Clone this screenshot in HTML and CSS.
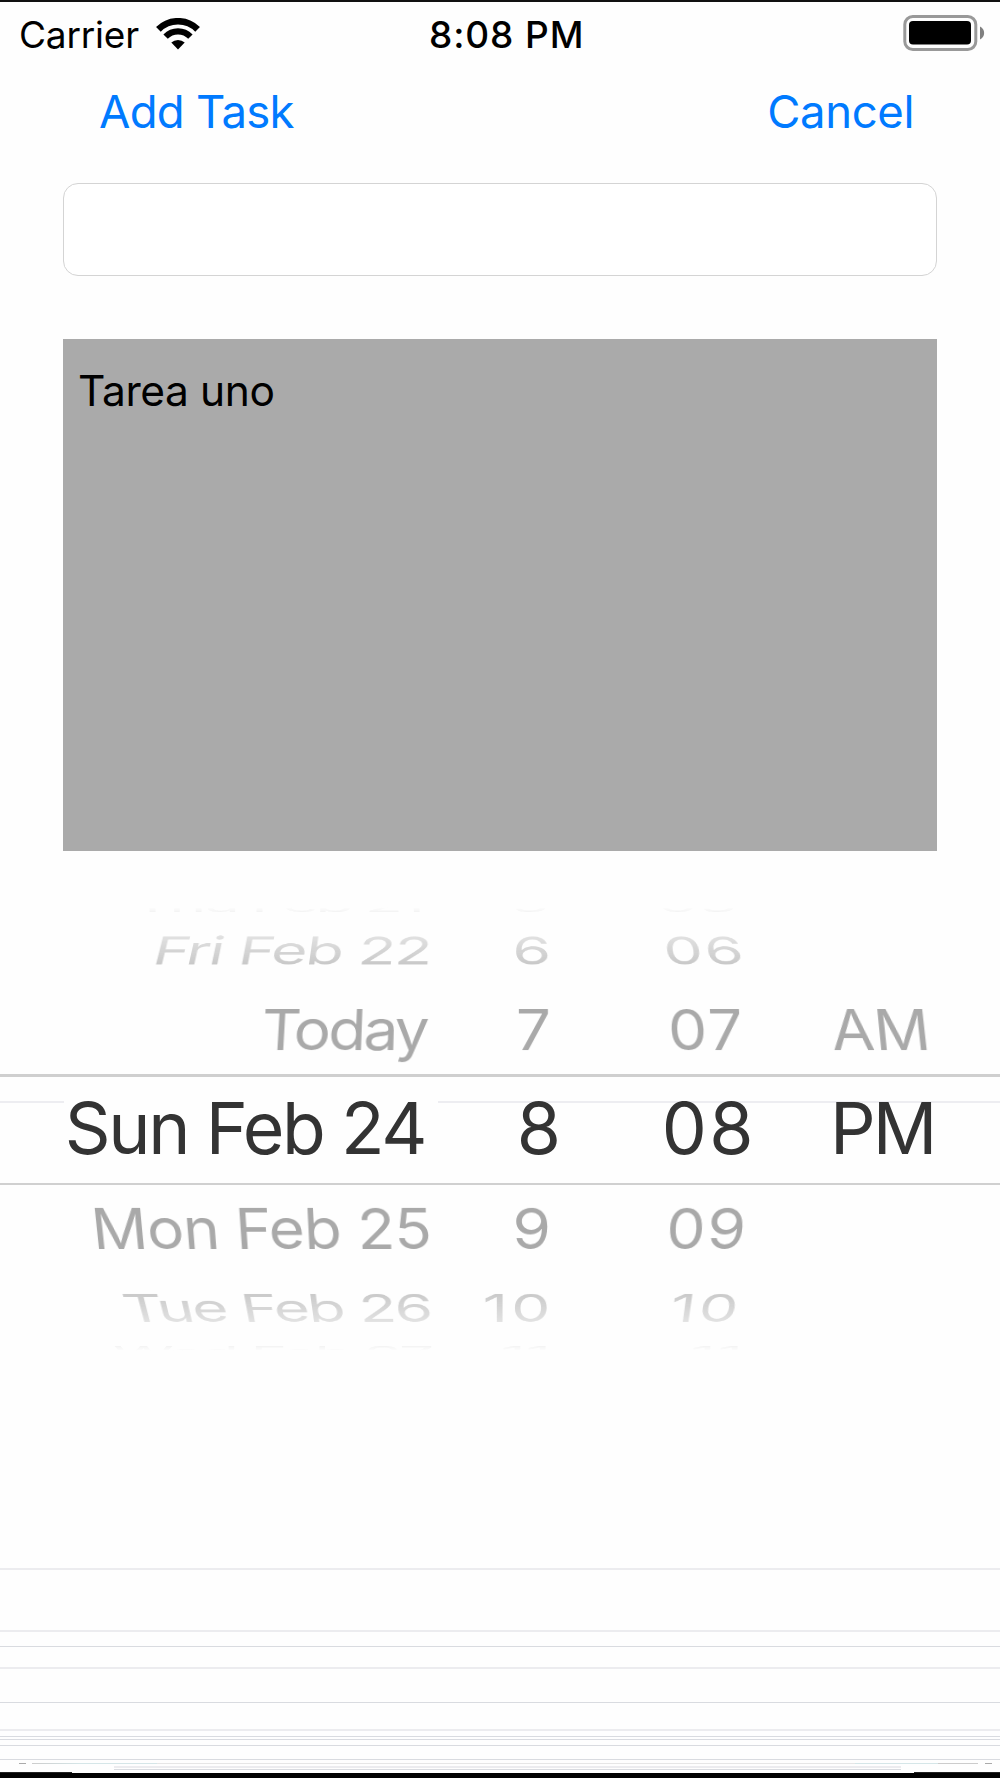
FILE: index.html
```html
<!DOCTYPE html>
<html lang="en">
<head>
  <meta charset="UTF-8">
  <meta name="viewport" content="width=device-width, initial-scale=1.0">
  <title>Add Task</title>
  <link rel="stylesheet" href="styles.css">
</head>
<body>
  <div class="status-bar">
    <div class="carrier">
      <span>Carrier</span>
      <svg class="wifi" viewBox="0 0 44 32" width="44" height="32">
        <g fill="none" stroke="#000">
          <path d="M2.4 11.4A27.6 27.6 0 0 1 41.6 11.4" stroke-width="6.6"/>
          <path d="M9.6 18.6A17.5 17.5 0 0 1 34.4 18.6" stroke-width="6.2"/>
        </g>
        <path d="M22 31.500L15.3 24.6A9.8 9.8 0 0 1 28.7 24.6Z"/>
      </svg>
    </div>
    <div class="time">8:08 PM</div>
    <svg class="battery" viewBox="0 0 82 36" width="82" height="36">
      <rect x="1.8" y="1.5" width="71" height="33" rx="8" fill="none" stroke="#999" stroke-width="3"/>
      <rect x="6" y="6" width="62" height="23.5" rx="4"/>
      <path d="M77 11.5C82.5 14 82.5 22 77 24.5Z" fill="#808080"/>
    </svg>
  </div>

  <div class="nav">
    <a class="add">Add Task</a>
    <a class="cancel">Cancel</a>
  </div>

  <form class="form">
    <input class="title" type="text">
    <textarea class="detail">Tarea uno</textarea>
  </form>

  <div class="picker">
    <div class="row ghost top">
      <span>Thu Feb 21</span><span>5</span><span>05</span>
    </div>
    <div class="row far above">
      <span>Fri Feb 22</span><span>6</span><span>06</span>
    </div>
    <div class="row near above">
      <span>Today</span><span>7</span><span>07</span><span>AM</span>
    </div>
    <div class="row selected">
      <span>Sun Feb 24</span><span>8</span><span>08</span><span>PM</span>
    </div>
    <div class="row near below">
      <span>Mon Feb 25</span><span>9</span><span>09</span>
    </div>
    <div class="row far below">
      <span>Tue Feb 26</span><span>10</span><span>10</span>
    </div>
    <div class="row ghost bottom">
      <span>Wed Feb 27</span><span>11</span><span>11</span>
    </div>
  </div>

  <div class="lines">
    <div class="line soft"></div>
    <div class="line soft gap-60"></div>
    <div class="line gap-14"></div>
    <div class="line soft gap-20"></div>
    <div class="line gap-33"></div>
    <div class="line soft gap-26"></div>
    <div class="line gap-5"></div>
    <div class="line gap-2"></div>
    <div class="line gap-5"></div>
    <div class="line gap-13"></div>
    <div class="line dashes gap-3"></div>
    <div class="line soft inset gap-2"></div>
    <div class="line inset gap-1"></div>
  </div>
  <div class="bottom-edge"></div>
</body>
</html>
```
FILE: styles.css
```css
* {
  box-sizing: border-box;
}
body {
  margin: 0;
  height: 1778px;
  overflow: hidden;
  font-family: Inter, "Liberation Sans", sans-serif;
  background-color: #fefefe;
  color: #000;
  border-top: 2px solid #111;
}

/* status bar */
.status-bar {
  display: grid;
  grid-template-columns: 410px 1fr auto;
  align-items: center;
  height: 64px;
  padding: 0 15px 0 19px;
  font-size: 37px;
}
.carrier {
  display: flex;
  align-items: center;
  gap: 17px;
  letter-spacing: -0.2px;
}
.wifi {
  margin-top: -1px;
}
.time {
  font-weight: 500;
  letter-spacing: 0.9px;
}
.battery {
  margin-top: -3px;
}

/* navigation */
.nav {
  display: flex;
  justify-content: space-between;
  align-items: center;
  height: 90px;
  padding: 0 86px 0 99px;
  font-size: 45.5px;
  color: #007aff;
}
.add {
  letter-spacing: -0.7px;
}
.cancel {
  letter-spacing: -0.4px;
}

/* form */
.form {
  display: flex;
  flex-direction: column;
  gap: 63px;
  padding: 27px 63px 0;
}
.title {
  height: 93px;
  border: 1px solid #d4d4d4;
  border-radius: 15px;
  background-color: #fff;
}
.detail {
  height: 512px;
  padding: 27px 15px;
  border: none;
  resize: none;
  overflow: hidden;
  background-color: #aaa;
  color: #000;
  font-family: inherit;
  font-size: 42.5px;
  line-height: 50px;
  letter-spacing: -0.4px;
}

/* date picker wheel */
.picker {
  margin-top: 48px;
}
.row {
  display: grid;
  grid-template-columns: 431px 120px 194px 1fr;
  align-items: center;
  height: 78px;
  font-size: 62px;
  line-height: 78px;
  text-align: right;
  white-space: nowrap;
  color: #a9a9a9;
}
.row span:nth-child(3) {
  letter-spacing: 2px;
}
.row span:nth-child(4) {
  padding-left: 86px;
  text-align: left;
}
.near.above {
  height: 81px;
  padding-top: 2px;
  margin-bottom: 5px;
  transform: perspective(1700px) rotateX(24deg);
}
.near.above span:first-child {
  padding-right: 4px;
  letter-spacing: -2.7px;
}
.near.below {
  grid-template-columns: 431px 120px 197px 1fr;
  margin: 5px 0 0;
  transform: perspective(1700px) rotateX(-24deg);
}
.near.below span:first-child {
  letter-spacing: -0.9px;
}
.far.above {
  height: 76px;
  transform: perspective(1700px) rotateX(51.5deg);
  mask-image: linear-gradient(rgba(0,0,0,0.33) 20%, rgba(0,0,0,0.63) 80%);
}
.far.above span:first-child {
  letter-spacing: -1.6px;
}
.far.below {
  grid-template-columns: 431px 123px 188px 1fr;
  padding-top: 2px;
  transform: perspective(1700px) rotateX(-51.5deg);
  mask-image: linear-gradient(rgba(0,0,0,0.63) 20%, rgba(0,0,0,0.33) 80%);
}
.far.below span:first-child {
  letter-spacing: -2px;
}
.far.below span:nth-child(n+2) {
  letter-spacing: 3.5px;
}
.selected {
  grid-template-columns: 430px 131px 195px 1fr;
  height: 111px;
  padding-bottom: 4px;
  border-top: 3px solid #cfcfcf;
  border-bottom: 2px solid #d0d0d0;
  font-size: 71.5px;
  color: #333;
  background-image: linear-gradient(#ededf1, #ededf1), linear-gradient(#ededf1, #ededf1);
  background-size: 64px 2px, 562px 2px;
  background-position: 0 24px, 438px 24px;
  background-repeat: no-repeat;
}
.selected span:first-child {
  padding-right: 5px;
  letter-spacing: -2.4px;
}
.selected span:nth-child(3) {
  letter-spacing: 2.5px;
}
.selected span:nth-child(4) {
  padding-left: 74px;
  letter-spacing: -3px;
}
.ghost {
  height: 13px;
  line-height: 13px;
  color: #f3f3f3;
}
.ghost span {
  transform: scaleY(0.28);
}
.ghost span:first-child {
  letter-spacing: -3px;
}
.ghost.top {
  grid-template-columns: 422px 127px 190px 1fr;
  mask-image: linear-gradient(transparent 65%, #000);
}
.ghost.bottom {
  mask-image: linear-gradient(#000, transparent 35%);
}

/* thin lines at the bottom */
.lines {
  padding-top: 209px;
}
.line {
  height: 1px;
  background-color: #d9dbe0;
}
.soft {
  height: 2px;
  background-color: #ececef;
}
.inset {
  margin-left: 114px;
  margin-right: 99px;
}
.dashes {
  background-image: linear-gradient(90deg, #fefefe 19px, #aaa 19px, #aaa 26px, #fefefe 26px, #fefefe 32px, #ccc 32px, #d5e6e8 80px, #d5e6e8 157px, #e6e6e6 157px, #e6e6e6 855px, #d5e6e8 855px, #d5e6e8 938px, #ccc 938px, #ccc 978px, #fefefe 978px, #fefefe 985px, #aaa 985px, #aaa 992px, #fefefe 992px);
}
.gap-1 {
  margin-top: 1px;
}
.gap-2 {
  margin-top: 2px;
}
.gap-3 {
  margin-top: 3px;
}
.gap-5 {
  margin-top: 5px;
}
.gap-13 {
  margin-top: 13px;
}
.gap-14 {
  margin-top: 14px;
}
.gap-20 {
  margin-top: 20px;
}
.gap-26 {
  margin-top: 26px;
}
.gap-33 {
  margin-top: 33px;
}
.gap-60 {
  margin-top: 60px;
}
.bottom-edge {
  height: 6px;
  margin-top: 2px;
  background: linear-gradient(90deg, #222 72px, #fefefe 72px, #fefefe 914px, #222 914px) top / 100% 1px no-repeat, #000;
}
```
